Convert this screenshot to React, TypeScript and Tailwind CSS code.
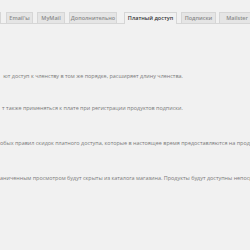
export default function App() {
  const tabs = [
    { label: "Email'ы", w: "w-[27px]", ml: "ml-[5px]" },
    { label: "MyMail", w: "w-[28px]", ml: "ml-[4px]" },
    { label: "Дополнительно", w: "w-[48px]", ml: "ml-[4px]" },
  ];

  return (
    <div
      className="w-[250px] h-[250px] overflow-hidden bg-[#f1f1f1]"
      style={{ fontFamily: '"Open Sans", "Noto Sans", sans-serif' }}
    >
      {/* tab strip */}
      <div className="flex items-end h-[24px] pt-[12px] border-b border-[#d6d6d6] whitespace-nowrap">
        <div className="w-[3px] h-[11px] bg-[#e5e5e5] border border-l-0 border-b-0 border-[#d6d6d6]" />
        {tabs.map((t) => (
          <div
            key={t.label}
            className={`${t.w} ${t.ml} h-[11px] shrink-0 flex items-center justify-center bg-[#e5e5e5] border border-b-0 border-[#d6d6d6] text-[5.5px] font-semibold text-[#8a8a8a]`}
          >
            {t.label}
          </div>
        ))}
        <div className="w-[53px] ml-[7px] h-[12px] -mb-px shrink-0 flex items-center justify-center bg-[#f1f1f1] border border-b-0 border-[#d6d6d6] text-[5.5px] font-semibold text-[#333]">
          Платный доступ
        </div>
        <div className="w-[35px] ml-[4px] h-[11px] shrink-0 flex items-center justify-center bg-[#e5e5e5] border border-b-0 border-[#d6d6d6] text-[5.5px] font-semibold text-[#8a8a8a]">
          Подписки
        </div>
        <div className="w-[36px] ml-[3px] h-[11px] shrink-0 flex items-center justify-center bg-[#e5e5e5] border border-b-0 border-[#d6d6d6] text-[5.5px] font-semibold text-[#8a8a8a]">
          Mailster
        </div>
      </div>

      {/* settings descriptions */}
      <div className="text-[5.45px] leading-[8px] text-[#7a7a7a] whitespace-nowrap">
        <div className="w-[183px] mt-[48px] flex justify-end overflow-hidden">
          <span>ют доступ к членству в том же порядке, расширяет длину членства.</span>
        </div>
        <div className="w-[183px] mt-[24px] flex justify-end overflow-hidden">
          <span>т также применяться к плате при регистрации продуктов подписки.</span>
        </div>
        <div className="mt-[27px] overflow-hidden">
          обых правил скидок платного доступа, которые в настоящее время предоставляются на продукты
        </div>
        <div className="mt-[27px] overflow-hidden">
          аниченным просмотром будут скрыты из каталога магазина. Продукты будут доступны непосредственно
        </div>
      </div>
    </div>
  );
}
